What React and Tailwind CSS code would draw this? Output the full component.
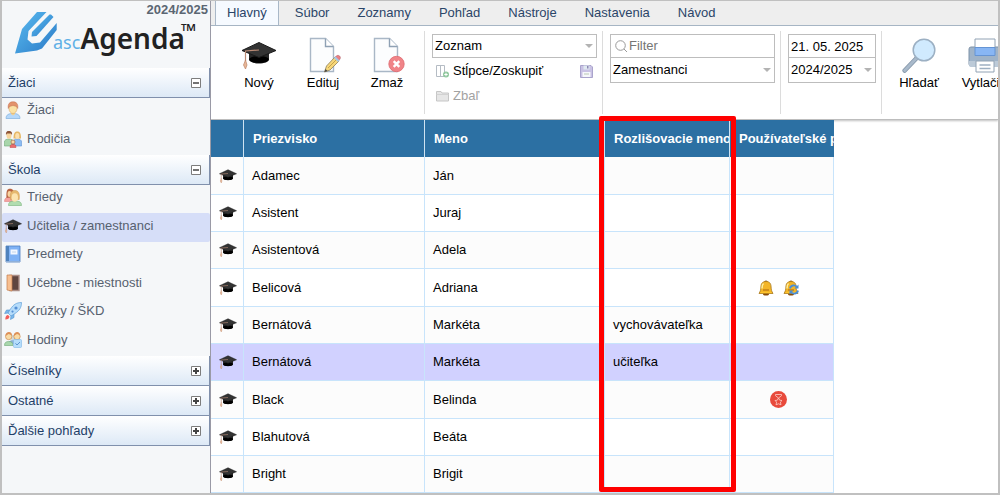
import React from "react";

function CapIcon({ className }) {
  return (
    <svg viewBox="0 0 36 28" className={className} aria-hidden="true">
      <path d="M8 11v7c0 3 5 4.500 10 4.500S28 21 28 18v-7z" fill="#262626" />
      <ellipse cx="18" cy="18.500" rx="10" ry="3.500" fill="#000" />
      <path d="M1 9.500 18 1.500l17 8-17 7z" fill="#333" stroke="#1a1a1a" strokeWidth="1" />
      <path d="M18 9 4.500 10v10" fill="none" stroke="#b98a74" strokeWidth="1.200" />
      <path d="M4.500 19l1.500 5-1.500 4-2-4z" fill="#e8b798" stroke="#bd8466" strokeWidth=".7" />
    </svg>
  );
}

function StudentIcon({ className }) {
  return (
    <svg viewBox="0 0 18 18" className={className} aria-hidden="true">
      <path d="M2 17.500c0-4 3-5 7-5s7 1 7 5z" fill="#b5d8fa" stroke="#82b0dc" strokeWidth=".7" />
      <path d="M7 10h4v3l-2 1.500-2-1.500z" fill="#f1cf8e" />
      <ellipse cx="9" cy="7.500" rx="4" ry="5" fill="#fbe2a4" stroke="#d7a869" strokeWidth=".6" />
      <path d="M4.300 7.500C3.500 2.500 6 .8 9 .8s5.500 1.700 4.700 6.700L12.700 5.500 9 4.500 5.300 5.500z" fill="#e3926b" stroke="#c2714f" strokeWidth=".5" />
    </svg>
  );
}

function ParentsIcon({ className }) {
  return (
    <svg viewBox="0 0 18 18" className={className} aria-hidden="true">
      <path d="M.4 16v-4c0-2 2-3 4.600-3s4.500 1 4.500 3v4z" fill="#a9d6ab" stroke="#6da875" strokeWidth=".6" />
      <path d="M9.500 8.500C9.500 3 11 1.500 13.300 1.500S17 3 17 8.500z" fill="#e6b866" />
      <path d="M9 16v-4c0-2 2-3 4.300-3s4.300 1 4.300 3v4z" fill="#8cbcf3" stroke="#5f94d4" strokeWidth=".6" />
      <ellipse cx="5" cy="5.500" rx="2.500" ry="3.300" fill="#f8d59d" />
      <path d="M2 5C1.500 1.500 3.500 1 5 1s3.600.5 3 4l-1-1.500H3z" fill="#8c5235" />
      <ellipse cx="13.300" cy="6" rx="2.100" ry="3" fill="#fbe0b0" />
      <path d="M6 17.500c0-2.500 1-3.200 3-3.200s3 .7 3 3.200z" fill="#ec6b6c" stroke="#bf4648" strokeWidth=".5" />
      <circle cx="9" cy="12" r="2" fill="#f9d7a5" stroke="#9a5b3b" strokeWidth=".6" />
    </svg>
  );
}

function ClassIcon({ className }) {
  return (
    <svg viewBox="0 0 18 18" className={className} aria-hidden="true">
      <path d="M.5 13.500c0-3 1.500-4.500 5-4.500s4 2 4 4.500z" fill="#f5a2a0" stroke="#d87575" strokeWidth=".5" />
      <path d="M2.500 10C2 3 3 .8 6 .8s4.500 2 4.500 8z" fill="#b86342" />
      <ellipse cx="5.500" cy="6" rx="2" ry="3" fill="#f8d3a0" />
      <path d="M4.500 17.500c0-3.500 2-4.500 6.500-4.500s6.500 1 6.500 4.500z" fill="#b1ddb0" stroke="#77b27b" strokeWidth=".6" />
      <path d="M6.500 11.500C5.500 4.500 7.500 2.500 10.800 2.500S16 4.500 15.200 11.500z" fill="#e6b970" stroke="#ca964b" strokeWidth=".5" />
      <ellipse cx="10.800" cy="9.500" rx="3.200" ry="4.300" fill="#fce4b0" />
    </svg>
  );
}

function BookIcon({ className }) {
  return (
    <svg viewBox="0 0 18 18" className={className} aria-hidden="true">
      <path d="M2 1h14v16H2z" fill="#7fb2f5" stroke="#4b7fc0" strokeWidth=".8" />
      <path d="M2 1h3v16H2z" fill="#4f82bd" />
      <path d="M6.500 4.500h7v5h-7z" fill="#f2f7ff" />
      <path d="M8 7h4" stroke="#b7cbe3" strokeWidth=".8" />
      <path d="M2 16.500h14" stroke="#90b0d8" />
    </svg>
  );
}

function DoorIcon({ className }) {
  return (
    <svg viewBox="0 0 18 18" className={className} aria-hidden="true">
      <path d="M6 1.500h9v15H6z" fill="#5f4640" stroke="#ab8e87" strokeWidth="1.400" />
      <path d="M3 1h5v16L3 16z" fill="#f7bf90" stroke="#c17c4d" strokeWidth=".7" />
    </svg>
  );
}

function RocketIcon({ className }) {
  return (
    <svg viewBox="0 0 18 18" className={className} aria-hidden="true">
      <path d="M6 8 2.500 8 .6 11.500l4-.5zM10 12v3.500L6.500 17.500l.5-4z" fill="#7db8ec" stroke="#5294ce" strokeWidth=".6" />
      <path d="M17.500.5c-5 0-8 2-11 6.500l-2.500 4 3 3 4-2.500c4.500-3 6.500-6 6.500-11z" fill="#b6dcfa" stroke="#5d9fd8" strokeWidth=".7" />
      <circle cx="12" cy="6" r="1.600" fill="#5590d5" />
      <circle cx="8.500" cy="9.600" r="1.100" fill="#5590d5" />
      <path d="M4 13c-1.700 0-2.700 1.500-2.700 4.500 2.700 0 4-1.200 4.200-3z" fill="#f25d5a" />
    </svg>
  );
}

function LessonsIcon({ className }) {
  return (
    <svg viewBox="0 0 18 18" className={className} aria-hidden="true">
      <path d="M4.500 13c0-3 2-4 4.500-4s4.500 1 4.500 4z" fill="#8bb0d1" />
      <circle cx="9" cy="6.500" r="2.800" fill="#cfd9dc" />
      <path d="M.5 14.500c0-3 1.500-4 4.300-4s4.200 1 4.200 4z" fill="#a9d7ac" stroke="#6da875" strokeWidth=".6" />
      <circle cx="4.700" cy="5.500" r="3.200" fill="#f9dba5" stroke="#cc8c55" strokeWidth=".7" />
      <path d="M1.500 5C1.500 2 3 1 5 1s3 1.500 3 3L4.500 3z" fill="#dd9058" />
      <circle cx="13" cy="5.500" r="3.200" fill="#f9dba5" stroke="#cc8c55" strokeWidth=".7" />
      <path d="M9.800 5C9.800 2 11.500 1 13.200 1s3 1.500 3 3L13 3z" fill="#dd9058" />
      <rect x="9.500" y="8.500" width="8" height="8" rx="1" fill="#b5ddfb" stroke="#7fb7e8" strokeWidth=".6" />
      <path d="m11.500 12.300 1.500 1.700 3-3" fill="none" stroke="#5d94cf" strokeWidth="1" />
    </svg>
  );
}

function PageShape() {
  return (
    <>
      <path d="M1.500 1.500h15l8 8v25h-23z" fill="#fcfdfe" stroke="#a9b7c6" strokeWidth="1.400" />
      <path d="M16.500 1.500v8h8" fill="#fff" stroke="#8fa1b4" strokeWidth="1.400" />
    </>
  );
}

function EditIcon({ className }) {
  return (
    <svg viewBox="0 0 32 36" className={className} aria-hidden="true">
      <PageShape />
      <path d="m15.500 35 2-6 8.500-9 4 4-9 9z" fill="#f7d779" stroke="#8b7f5a" strokeWidth=".8" />
      <path d="m19 31 9-9" stroke="#c7a44c" strokeWidth="1" />
      <path d="m26 20 1.700-1.200c2-1.500 4.800 1.200 3.300 3.200L29.500 24z" fill="#ec7f83" stroke="#a9606a" strokeWidth=".5" />
      <path d="m25 21 1.500-1.500 4 4L29 25z" fill="#a4c8e7" />
      <path d="m15.500 35 1-3 2 2z" fill="#444" />
    </svg>
  );
}

function DeleteIcon({ className }) {
  return (
    <svg viewBox="0 0 32 36" className={className} aria-hidden="true">
      <PageShape />
      <circle cx="23.500" cy="27" r="7.700" fill="#f08488" stroke="#de6a70" strokeWidth=".8" />
      <path d="m20.700 24.200 5.600 5.600m0-5.600-5.600 5.600" stroke="#fff" strokeWidth="2.400" />
    </svg>
  );
}

function SearchIcon({ className }) {
  return (
    <svg viewBox="0 0 34 35" className={className} aria-hidden="true">
      <path d="m2.700 32.500 12-12.500" stroke="#8395a8" strokeWidth="4.600" strokeLinecap="round" />
      <path d="m2.700 32.500 12-12.500" stroke="#a9bacb" strokeWidth="3" strokeLinecap="round" />
      <circle cx="22" cy="12" r="10.800" fill="#d0eafe" stroke="#9cb0c3" strokeWidth="1.500" />
    </svg>
  );
}

function PrintIcon({ className }) {
  return (
    <svg viewBox="0 0 34 35" className={className} aria-hidden="true">
      <rect x="1" y="9" width="32" height="19" rx="2" fill="#9fb3c8" stroke="#7f93a8" />
      <path d="M1 23h32v4a2 2 0 0 1-2 2H3a2 2 0 0 1-2-2z" fill="#bccad8" />
      <path d="M7 1h20v9H7z" fill="#fff" stroke="#91a2b4" />
      <path d="M7 9.500h20v8H7z" fill="#88b6f4" stroke="#6594d4" />
      <path d="M8 23h18v11H8z" fill="#fff" stroke="#91a2b4" />
      <path d="M11.500 27h11M11.500 30.500h11" stroke="#9eb0c2" strokeWidth="1.300" />
    </svg>
  );
}

function BellIcon({ className, sync }) {
  return (
    <svg viewBox="0 0 16 16" className={className} aria-hidden="true">
      <ellipse cx="8" cy="14" rx="3" ry="1.500" fill="#8a4c09" />
      <path d="M6.300 2.300C6.300.5 9.700.5 9.700 2.300" fill="#b98525" stroke="#76521a" strokeWidth=".8" />
      <path d="M8 1.500c-4 0-5 2.500-5.100 5.500-.1 3-.5 4-1.900 6.500h14c-1.400-2.500-1.800-3.500-1.900-6.500C13 4 12 1.500 8 1.500z" fill="#f3b527" stroke="#a97a20" strokeWidth=".8" />
      <path d="M5.500 3.500c-1.300 1-1.500 3-1.500 5" stroke="#fff0a2" strokeWidth="1.500" fill="none" />
      <path d="M5 10h6" stroke="#bd7c18" strokeWidth="1.400" />
      <path d="M2.500 12.600h11" stroke="#ffc62e" strokeWidth="1" />
      {sync && (
        <g fill="none" stroke="#4a8fd8" strokeWidth="1.800">
          <path d="M7 8.500c.6-3.500 5-4 7-1.500M15 10.500c-.6 3.500-5 4-7 1.500" />
          <path d="M15.500 4.500v4h-4zM6.500 14.500v-4h4z" fill="#4a8fd8" stroke="none" />
        </g>
      )}
    </svg>
  );
}

function BlockedIcon({ className }) {
  return (
    <svg viewBox="0 0 17 17" className={className} aria-hidden="true">
      <circle cx="8.500" cy="8.500" r="8.500" fill="#e84a3c" />
      <g fill="none" stroke="#fbd0ca" strokeWidth=".8">
        <path d="M5.500 3.500h6v1.200L8.500 7 5.500 4.700z" />
        <path d="m8.500 7 1.200 2.200 2.300.3-1.600 1.600.6 2.700-2.500-1-2.500 1 .6-2.700L5 9.500l2.300-.3z" />
      </g>
    </svg>
  );
}

function Logo() {
  return (
    <div className="flex h-[52px] items-start pl-[11px]">
      <svg viewBox="0 0 45 45" className="-mt-[5px] size-[45px] shrink-0" aria-hidden="true">
        <defs>
          <linearGradient id="pen" x1="0" y1="0" x2="1" y2="1">
            <stop offset="0" stopColor="#5bb9ef" />
            <stop offset=".45" stopColor="#459fde" />
            <stop offset="1" stopColor="#2a78c6" />
          </linearGradient>
        </defs>
        <path
          d="M2 42.500 9 18 24 1h9.500L15.500 20 14.500 28.500l4.500 4 8-1L43.700 12v7L29 37.500 24 39.500z"
          fill="url(#pen)"
        />
        <path d="M18.500 25.500 19 21 36.500 3.500h1.500L40.500 6 23.500 25z" fill="url(#pen)" />
      </svg>
      <div className="-ml-[5px] mt-[9px] flex items-baseline whitespace-nowrap font-['Noto_Sans','Open_Sans',sans-serif] leading-[26px]">
        <span className="text-[18px] text-[#5fb0e6]">asc</span>
        <span className="text-[28px] font-semibold text-[#222]">Agenda</span>
        <span className="-ml-1 self-start text-[20px] font-bold leading-3 text-[#222]">™</span>
      </div>
    </div>
  );
}

function ToggleBox({ open }) {
  return (
    <svg viewBox="0 0 10 10" className="size-[10px]" aria-hidden="true">
      <path d="M.5.5h9v9h-9z" fill="#fff" stroke="#7d7d7d" />
      <path d={open ? "M2 5h6" : "M2 5h6M5 2v6"} stroke="#444" strokeWidth={open ? 1.5 : 2} />
    </svg>
  );
}

const sections = [
  {
    title: "Žiaci",
    items: [
      { label: "Žiaci", Icon: StudentIcon },
      { label: "Rodičia", Icon: ParentsIcon },
    ],
  },
  {
    title: "Škola",
    items: [
      { label: "Triedy", Icon: ClassIcon },
      { label: "Učitelia / zamestnanci", Icon: CapIcon, active: true },
      { label: "Predmety", Icon: BookIcon },
      { label: "Učebne - miestnosti", Icon: DoorIcon },
      { label: "Krúžky / ŠKD", Icon: RocketIcon },
      { label: "Hodiny", Icon: LessonsIcon },
    ],
  },
  { title: "Číselníky" },
  { title: "Ostatné" },
  { title: "Ďalšie pohľady" },
];

function Sidebar() {
  return (
    <aside className="w-[209px] shrink-0 border-r border-[#9a9aa6] bg-[#f5f7f9]">
      <p className="h-[15px] pr-[2px] text-right font-bold leading-[17px] text-[#5b6672]">2024/2025</p>
      <Logo />
      <nav>
        {sections.map(({ title, items }) => (
          <section key={title}>
            <button
              type="button"
              aria-expanded={Boolean(items)}
              className="flex h-[30px] w-full items-center justify-between border-b border-r border-[#8090ac] bg-linear-to-b from-white to-[#dde9f6] pl-[6px] pr-[8px] text-[#1f3f68]"
            >
              {title}
              <ToggleBox open={Boolean(items)} />
            </button>
            {items && (
              <ul>
                {items.map(({ label, Icon, active }) => (
                  <li key={label} className="h-7 even:h-[29px]">
                    <a
                      href="#"
                      className={`flex h-full items-center gap-[5px] pb-1 pl-[2px] text-[#57616f] ${active ? "rounded-xs bg-[#d6def8]" : ""}`}
                    >
                      <Icon className="size-[18px]" />
                      {label}
                    </a>
                  </li>
                ))}
              </ul>
            )}
          </section>
        ))}
      </nav>
    </aside>
  );
}

const tabs = ["Súbor", "Zoznamy", "Pohľad", "Nástroje", "Nastavenia", "Návod"];

function ToolButton({ Icon, label, iconClass }) {
  return (
    <button type="button" className="flex w-16 shrink-0 flex-col items-center text-black">
      <span className="flex h-9 items-center">
        <Icon className={iconClass} />
      </span>
      <span className="whitespace-nowrap leading-5">{label}</span>
    </button>
  );
}

function Dropdown({ label, value, className }) {
  return (
    <div className={`relative ${className}`}>
      <select
        aria-label={label}
        className="size-full appearance-none border border-[#bdbdbd] bg-white pl-[2px] pr-4 text-black"
      >
        <option>{value}</option>
      </select>
      <svg viewBox="0 0 8 4" className="pointer-events-none absolute right-1 top-1/2 h-1 w-2 -translate-y-1/2" aria-hidden="true">
        <path d="M0 0h8L4 4z" fill="#b3b3b3" />
      </svg>
    </div>
  );
}

function Toolbar() {
  return (
    <div className="flex h-[94px] border-b border-[#bdbdbd] bg-white py-[5px] shadow-[0_1px_2px_rgba(0,0,0,0.25)]">
      <div className="flex w-[214px] shrink-0 border-r border-[#dcdcdc] pl-4 pt-[6px]">
        <ToolButton Icon={CapIcon} label="Nový" iconClass="h-[28px] w-[36px]" />
        <ToolButton Icon={EditIcon} label="Edituj" iconClass="ml-1 h-9 w-8" />
        <ToolButton Icon={DeleteIcon} label="Zmaž" iconClass="ml-1 h-9 w-8" />
      </div>
      <div className="w-[178px] shrink-0 border-r border-[#dcdcdc] pl-[7px] pr-[5px] pt-[3px]">
        <Dropdown label="Pohľad" value="Zoznam" className="h-[24px]" />
        <div className="flex h-[26px] items-center justify-between px-1">
          <button type="button" className="flex items-center gap-1 text-black">
            <svg viewBox="0 0 13 14" className="h-[14px] w-[13px]" aria-hidden="true">
              <path d="M.5 1.500h8v11h-8zM4.500 1.500v11" fill="#fff" stroke="#b5bcc4" />
              <circle cx="10" cy="10.500" r="3" fill="#8fc79d" />
              <path d="M10 8.800v3.400M8.300 10.500h3.400" stroke="#fff" />
            </svg>
            Stĺpce/Zoskupiť
          </button>
          <button type="button" aria-label="Uložiť">
            <svg viewBox="0 0 13 13" className="size-[13px]" aria-hidden="true">
              <path d="M.5.5h10.500l1.500 1.500v10.500H.5z" fill="#c9c2e4" stroke="#aaa4cc" />
              <path d="M3.500.5h6v4h-6z" fill="#dfe9f0" />
              <path d="M7 1h1.500v2.500H7z" fill="#8c86b3" />
              <path d="M2.500 7h8v5h-8z" fill="#f6f7fb" />
              <path d="M4 9h5" stroke="#b9c7b4" />
            </svg>
          </button>
        </div>
        <button type="button" disabled className="flex h-[24px] items-center gap-1 pl-1 text-[#a2a2a2]">
          <svg viewBox="0 0 13 12" className="h-3 w-[13px]" aria-hidden="true">
            <path d="M.5 1.500h4.500l1 1.500h6.500v8H.5z" fill="#e6e6e6" stroke="#c6c6c6" />
            <path d="M.5 4.500h12" stroke="#d2d2d2" />
          </svg>
          Zbaľ
        </button>
      </div>
      <div className="w-[178px] shrink-0 border-r border-[#dcdcdc] pl-[7px] pr-[5px] pt-[3px]">
        <div className="flex h-[24px] items-center gap-[2px] border border-[#bdbdbd] pl-1">
          <svg viewBox="0 0 12 12" className="size-3 shrink-0" fill="none" stroke="#999" aria-hidden="true">
            <circle cx="5.500" cy="5.500" r="4.800" />
            <path d="m9 9 3 3" />
          </svg>
          <input aria-label="Filter" placeholder="Filter" className="min-w-0 flex-1 outline-none placeholder:text-[#757575]" />
        </div>
        <Dropdown label="Skupina" value="Zamestnanci" className="-mt-px h-[26px]" />
      </div>
      <div className="w-[101px] shrink-0 border-r border-[#dcdcdc] pl-[7px] pr-[5px] pt-[3px]">
        <input
          aria-label="Dátum"
          defaultValue="21. 05. 2025"
          className="block h-[24px] w-full border border-[#bdbdbd] pl-[2px] text-black outline-none"
        />
        <Dropdown label="Školský rok" value="2024/2025" className="-mt-px h-[26px]" />
      </div>
      <div className="flex min-w-0 flex-1 overflow-hidden pl-[5px] pt-[6px]">
        <ToolButton Icon={SearchIcon} label="Hľadať" iconClass="h-[35px] w-[34px]" />
        <ToolButton Icon={PrintIcon} label="Vytlačiť" iconClass="ml-1 h-[35px] w-[34px]" />
      </div>
    </div>
  );
}

const rows = [
  { last: "Adamec", first: "Ján" },
  { last: "Asistent", first: "Juraj" },
  { last: "Asistentová", first: "Adela" },
  { last: "Belicová", first: "Adriana", status: "bells" },
  { last: "Bernátová", first: "Markéta", note: "vychovávateľka" },
  { last: "Bernátová", first: "Markéta", note: "učiteľka", selected: true },
  { last: "Black", first: "Belinda", status: "blocked" },
  { last: "Blahutová", first: "Beáta" },
  { last: "Bright", first: "Brigit" },
];

const headCell = "overflow-hidden whitespace-nowrap border-r border-[#cfe3f2] pl-[9px] text-left font-bold";
const bodyCell = "overflow-hidden whitespace-nowrap border-b border-r border-[#c8e4fb] pl-2";

function StaffTable() {
  return (
    <div className="relative w-[623px]">
      <table className="w-full table-fixed border-separate border-spacing-0 text-black">
        <colgroup>
          <col className="w-[33px]" />
          <col className="w-[181px]" />
          <col className="w-[180px]" />
          <col className="w-[125px]" />
          <col className="w-[104px]" />
        </colgroup>
        <thead>
          <tr className="h-[37px] bg-[#2c70a3] text-white">
            <th className={headCell} aria-label="Typ" />
            <th className={headCell}>Priezvisko</th>
            <th className={headCell}>Meno</th>
            <th className={headCell}>Rozlišovacie meno</th>
            <th className="overflow-hidden whitespace-nowrap pl-[9px] text-left font-bold">Používateľské práva</th>
          </tr>
        </thead>
        <tbody>
          {rows.map((row, i) => (
            <tr
              key={i}
              className={`h-[37px] nth-[3n+1]:h-[38px] ${row.selected ? "bg-[#d1d1ff]" : "bg-white odd:bg-[#fcfcfc]"}`}
            >
              <td className={bodyCell}>
                <CapIcon className="h-[14px] w-[18px]" />
              </td>
              <td className={bodyCell}>{row.last}</td>
              <td className={bodyCell}>{row.first}</td>
              <td className={bodyCell}>{row.note}</td>
              <td className="border-b border-r border-[#c8e4fb]">
                <div className="flex items-center justify-center gap-[9px] pr-[7px]">
                  {row.status === "bells" && (
                    <>
                      <BellIcon className="size-4" />
                      <BellIcon className="size-4" sync />
                    </>
                  )}
                  {row.status === "blocked" && <BlockedIcon className="size-[17px]" />}
                </div>
              </td>
            </tr>
          ))}
        </tbody>
      </table>
      <div className="pointer-events-none absolute -top-1 bottom-px left-[388px] z-20 w-[137px] rounded-xs border-5 border-[#ff0000]" />
    </div>
  );
}

export default function App() {
  return (
    <div className="flex min-h-screen border-2 border-t border-[#c0c0c0] bg-white font-['Liberation_Sans',Arial,sans-serif] text-[13px] leading-5">
      <Sidebar />
      <main className="min-w-0 flex-1 overflow-hidden">
        <nav className="flex h-[25px] border-b border-[#a9b8c8] bg-[#eee] pl-1 text-[#2b4568]">
          <a href="#" className="mr-[2px] flex items-center border-x border-[#a9b8c8] bg-[#f6faff] px-[11px]">
            Hlavný
          </a>
          {tabs.map((tab) => (
            <a key={tab} href="#" className="flex items-center px-[14px]">
              {tab}
            </a>
          ))}
        </nav>
        <Toolbar />
        <StaffTable />
      </main>
    </div>
  );
}
